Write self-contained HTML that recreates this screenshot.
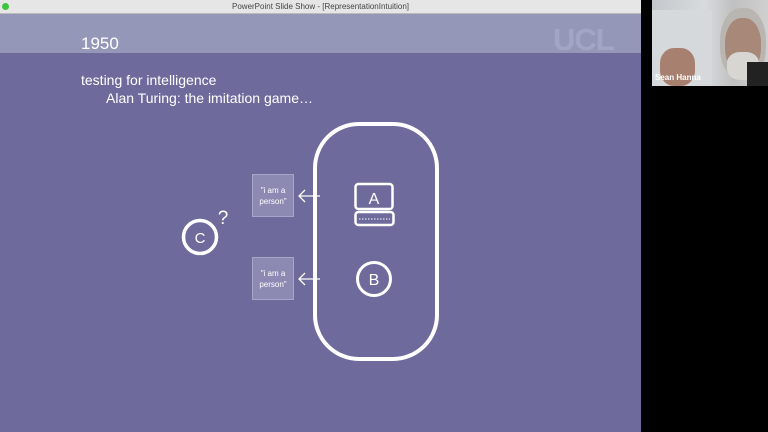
<!DOCTYPE html>
<html><head><meta charset="utf-8"><style>
body{margin:0;width:768px;height:432px;overflow:hidden;background:#000;font-family:"Liberation Sans",sans-serif;position:relative}
.bar{position:absolute;left:0;top:0;width:641px;height:13px;background:#e6e6e6;border-bottom:1px solid #bbb;font-size:8px;color:#444;text-align:center;line-height:13px}
.dot{position:absolute;left:2px;top:3px;width:7px;height:7px;border-radius:50%;background:#3ec43e}
.head{position:absolute;left:0;top:14px;width:641px;height:39px;background:#9597b9}
.main{position:absolute;left:0;top:53px;width:641px;height:379px;background:#6e6a9b}
.t{position:absolute;color:#fff}
.cam{position:absolute;left:652px;top:0;width:116px;height:86px;background:linear-gradient(90deg,#c4c7cb,#d8dbde 45%,#c0c0c0 70%,#d0d0d0);overflow:hidden}
</style></head><body>
<div class="bar"><div class="dot"></div>PowerPoint Slide Show - [RepresentationIntuition]</div>
<div class="head"></div>
<div class="main"></div>
<div class="t" style="left:81px;top:34px;font-size:17px">1950</div>
<div class="t" style="left:553px;top:22px;font-size:31px;font-weight:bold;color:#a3a5c4;letter-spacing:-1px">UCL</div>
<div class="t" style="left:81px;top:72px;font-size:14px">testing for intelligence</div>
<div class="t" style="left:106px;top:90px;font-size:14px">Alan Turing: the imitation game…</div>
<svg style="position:absolute;left:0;top:0" width="641" height="432">
<rect x="315" y="124" width="122" height="235" rx="44" fill="none" stroke="#fff" stroke-width="4"/>
<rect x="355.5" y="184" width="37" height="25" rx="3" fill="none" stroke="#fff" stroke-width="2.5"/>
<rect x="355.5" y="212" width="38" height="13" rx="3" fill="none" stroke="#fff" stroke-width="2.5"/>
<line x1="359" y1="219" x2="390" y2="219" stroke="#fff" stroke-width="1" stroke-dasharray="1.5 1.5"/>
<text x="374" y="204" fill="#fff" font-size="16" text-anchor="middle" font-family="Liberation Sans">A</text>
<circle cx="374" cy="279" r="16.5" fill="none" stroke="#fff" stroke-width="3"/>
<text x="374" y="285" fill="#fff" font-size="16" text-anchor="middle" font-family="Liberation Sans">B</text>
<circle cx="200" cy="237" r="16.5" fill="none" stroke="#fff" stroke-width="3.5"/>
<text x="200" y="243" fill="#fff" font-size="15" text-anchor="middle" font-family="Liberation Sans">C</text>
<text x="223" y="224" fill="#fff" font-size="19" text-anchor="middle" font-family="Liberation Sans">?</text>
<rect x="252.5" y="174.5" width="41" height="42" fill="#8c89b3" stroke="#a8a6c8"/>
<rect x="252.5" y="257.5" width="41" height="42" fill="#8c89b3" stroke="#a8a6c8"/>
<g fill="#fff" font-size="8" text-anchor="middle" font-family="Liberation Sans">
<text x="273" y="193">"i am a</text><text x="273" y="204">person"</text>
<text x="273" y="276">"i am a</text><text x="273" y="287">person"</text></g>
<g stroke="#fff" stroke-width="1.3" fill="none">
<path d="M320 196H299M305 190L299 196L305 202"/>
<path d="M320 279H299M305 273L299 279L305 285"/></g>
</svg>
<div class="cam">
<div style="position:absolute;left:0;top:10px;width:60px;height:76px;background:#d6d9dc"></div>
<div style="position:absolute;left:68px;top:8px;width:46px;height:72px;border-radius:45%;background:#b9b6b2"></div>
<div style="position:absolute;left:73px;top:18px;width:36px;height:55px;border-radius:45%;background:#a88878"></div>
<div style="position:absolute;left:75px;top:52px;width:32px;height:28px;border-radius:40%;background:#d8d6d2"></div>
<div style="position:absolute;left:95px;top:62px;width:25px;height:30px;background:#222"></div>
<div style="position:absolute;left:8px;top:48px;width:35px;height:38px;border-radius:40%;background:#a88070"></div>
<div style="position:absolute;left:3px;top:73px;color:#fff;font-size:8px;font-weight:bold">Sean Hanna</div>
</div>
</body></html>
